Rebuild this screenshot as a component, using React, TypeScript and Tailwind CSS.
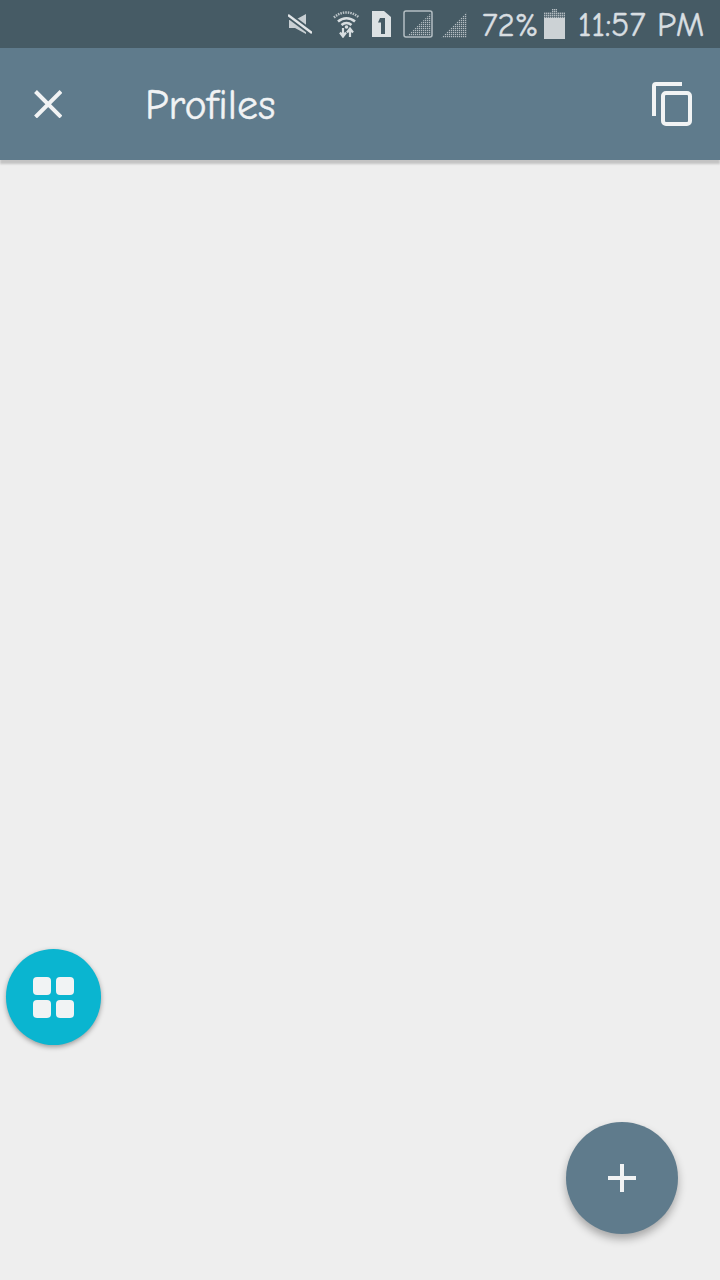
import React from "react";

const handFont = "font-['Comic_Neue','Comic_Sans_MS',cursive] [-webkit-text-stroke:0.4px_currentColor]";

const MuteIcon = () => (
  <svg width="24" height="22" viewBox="0 0 24 22" className="ml-[288px] shrink-0">
    <path d="M1 7h6l11-6v20L7 15H1z" fill="#d6dcdf" opacity="0.9" />
    <path d="M0 2L24 20" stroke="#455a64" strokeWidth="6" />
    <path d="M0 2L24 20" stroke="#e2e6e8" strokeWidth="2.500" />
  </svg>
);

const WifiIcon = () => (
  <svg width="27" height="28" viewBox="0 0 27 28" className="ml-[21px] shrink-0" fill="none" stroke="#d8dee1">
    <path d="M1 7.500C8 .8 19 .8 26 7.500" strokeWidth="2.500" strokeDasharray="1.500 1" opacity="0.8" />
    <path d="M5 11.500C10 7 17 7 22 11.500" strokeWidth="2.500" />
    <path d="M8.500 15C11.500 12.400 15.500 12.400 18.500 15" strokeWidth="2.500" />
    <circle cx="13.500" cy="17" r="1.800" fill="#d8dee1" stroke="none" />
    <path d="M10 18v7M7 22.500l3 4 3-4" strokeWidth="2.200" />
    <path d="M17 27v-7M14 22.500l3-4 3 4" strokeWidth="2.200" />
  </svg>
);

const SimIcon = () => (
  <svg width="21" height="28" viewBox="0 0 21 28" className="ml-[11px] shrink-0">
    <path d="M1 1h12l7 6v20H1z" fill="#dce1e3" />
    <path d="M9 8h5v16H10V12.500H7z" fill="#455a64" />
  </svg>
);

const SignalBox = () => (
  <svg width="30" height="28" viewBox="0 0 30 28" className="ml-[11px] shrink-0">
    <defs>
      <pattern id="dotsBox" width="2" height="2" patternUnits="userSpaceOnUse">
        <rect width="1.200" height="1.200" fill="#d8dee1" />
      </pattern>
    </defs>
    <path d="M28 3v23H4z" fill="url(#dotsBox)" opacity="0.75" />
    <rect x="1" y="1" width="28" height="26" rx="2" fill="none" stroke="#b4bfc4" strokeWidth="1.500" />
  </svg>
);

const SignalTriangle = () => (
  <svg width="26" height="26" viewBox="0 0 26 26" className="ml-2 mt-[2px] shrink-0">
    <defs>
      <pattern id="dotsTri" width="2" height="2" patternUnits="userSpaceOnUse">
        <rect width="1.200" height="1.200" fill="#d8dee1" />
      </pattern>
    </defs>
    <path d="M26 0v26H0z" fill="url(#dotsTri)" opacity="0.75" />
  </svg>
);

const BatteryIcon = () => (
  <svg width="21" height="30" viewBox="0 0 21 30" className="ml-[6px] shrink-0">
    <defs>
      <pattern id="dotsBat" width="2" height="2" patternUnits="userSpaceOnUse">
        <rect width="1.400" height="1.400" fill="#e2e6e8" />
      </pattern>
    </defs>
    <path d="M8 0h5v3h8v6H0V3h8z" fill="url(#dotsBat)" opacity="0.7" />
    <rect y="9" width="21" height="21" fill="#ccd2d5" />
  </svg>
);

const App = () => {
  return (
    <div className="relative h-[1280px] w-[720px] overflow-hidden bg-[#eeeeee]">
      <div className="flex h-12 items-center bg-[#465b65]">
        <MuteIcon />
        <WifiIcon />
        <SimIcon />
        <SignalBox />
        <SignalTriangle />
        <span className={`ml-[15px] w-[56px] whitespace-nowrap pt-[2px] text-[33px] leading-none text-[#d8dee1] ${handFont}`}>
          72%
        </span>
        <BatteryIcon />
        <span className={`ml-[13px] whitespace-nowrap pt-[2px] text-[34px] leading-none text-[#d8dee1] ${handFont}`}>
          11:57 PM
        </span>
      </div>

      <header className="flex h-28 items-center bg-[#5f7b8c] shadow-[0_4px_2px_rgba(0,0,0,0.18)]">
        <svg width="28" height="28" viewBox="0 0 28 28" className="ml-[34px] shrink-0" fill="none" stroke="#f1f3f4" strokeWidth="4">
          <path d="M1.500 1.500L27 27M27 1.500L1.500 27" />
        </svg>
        <h1 className={`ml-[83px] pt-1 text-[42px] leading-none text-[#f1f3f4] ${handFont}`}>Profiles</h1>
        <svg width="40" height="44" viewBox="0 0 40 44" className="ml-auto mr-[28px] shrink-0" fill="none" stroke="#f1f3f4" strokeWidth="4">
          <path d="M2 34V4a2 2 0 0 1 2-2h26" />
          <rect x="11" y="11" width="27" height="31" rx="3" />
        </svg>
      </header>

      <button className="absolute left-[6px] top-[949px] flex h-24 w-[95px] items-center justify-center rounded-full bg-[#0ab5d0] shadow-[0_2px_5px_rgba(0,0,0,0.35)]">
        <span className="grid grid-cols-2 gap-[5px]">
          <span className="h-[18px] w-[18px] rounded-[4px] bg-[#f1f3f4]" />
          <span className="h-[18px] w-[18px] rounded-[4px] bg-[#f1f3f4]" />
          <span className="h-[18px] w-[18px] rounded-[4px] bg-[#f1f3f4]" />
          <span className="h-[18px] w-[18px] rounded-[4px] bg-[#f1f3f4]" />
        </span>
      </button>

      <button className="absolute left-[566px] top-[1122px] flex h-28 w-28 items-center justify-center rounded-full bg-[#5f7b8c] shadow-[0_5px_8px_rgba(0,0,0,0.3)]">
        <svg width="28" height="28" viewBox="0 0 28 28" fill="none" stroke="#f1f3f4" strokeWidth="4">
          <path d="M14 0v28M0 14h28" />
        </svg>
      </button>
    </div>
  );
};

export default App;
